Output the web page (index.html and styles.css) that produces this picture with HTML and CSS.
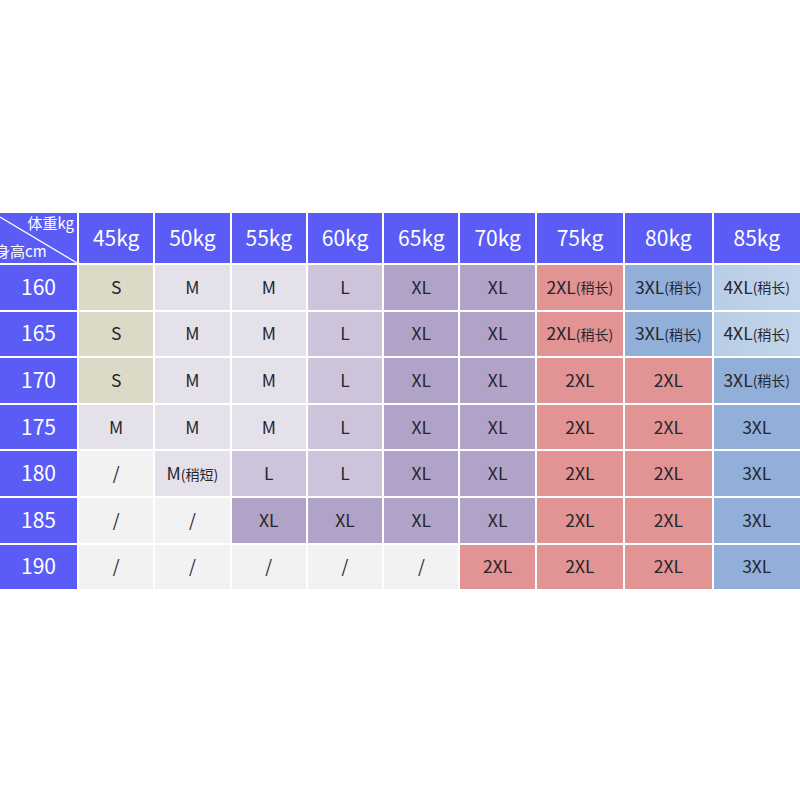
FILE: index.html
```html
<!DOCTYPE html>
<html lang="zh-CN">
<head>
<meta charset="utf-8">
<title>尺码表</title>
<link rel="stylesheet" href="styles.css">
</head>
<body>
<div class="page">
  <div class="chart">
    <div class="hd corner">
      <svg class="diag" viewBox="0 0 77 50" preserveAspectRatio="none"><line x1="0" y1="4" x2="77" y2="50" stroke="#fff" stroke-width="1.3"/></svg>
      <span class="c-top">体重kg</span>
      <span class="c-bot">身高cm</span>
    </div>
    <div class="hd">45kg</div><div class="hd">50kg</div><div class="hd">55kg</div><div class="hd">60kg</div><div class="hd">65kg</div><div class="hd">70kg</div><div class="hd">75kg</div><div class="hd">80kg</div><div class="hd">85kg</div>

    <div class="rl">160</div>
    <div class="c s">S</div><div class="c m">M</div><div class="c m">M</div><div class="c l">L</div><div class="c xl">XL</div><div class="c xl">XL</div><div class="c x2">2XL<small>(稍长)</small></div><div class="c x3">3XL<small>(稍长)</small></div><div class="c x4">4XL<small>(稍长)</small></div>

    <div class="rl">165</div>
    <div class="c s">S</div><div class="c m">M</div><div class="c m">M</div><div class="c l">L</div><div class="c xl">XL</div><div class="c xl">XL</div><div class="c x2">2XL<small>(稍长)</small></div><div class="c x3">3XL<small>(稍长)</small></div><div class="c x4">4XL<small>(稍长)</small></div>

    <div class="rl">170</div>
    <div class="c s">S</div><div class="c m">M</div><div class="c m">M</div><div class="c l">L</div><div class="c xl">XL</div><div class="c xl">XL</div><div class="c x2">2XL</div><div class="c x2">2XL</div><div class="c x3">3XL<small>(稍长)</small></div>

    <div class="rl">175</div>
    <div class="c m">M</div><div class="c m">M</div><div class="c m">M</div><div class="c l">L</div><div class="c xl">XL</div><div class="c xl">XL</div><div class="c x2">2XL</div><div class="c x2">2XL</div><div class="c x3">3XL</div>

    <div class="rl">180</div>
    <div class="c na">/</div><div class="c m">M<small>(稍短)</small></div><div class="c l">L</div><div class="c l">L</div><div class="c xl">XL</div><div class="c xl">XL</div><div class="c x2">2XL</div><div class="c x2">2XL</div><div class="c x3">3XL</div>

    <div class="rl">185</div>
    <div class="c na">/</div><div class="c na">/</div><div class="c xl">XL</div><div class="c xl">XL</div><div class="c xl">XL</div><div class="c xl">XL</div><div class="c x2">2XL</div><div class="c x2">2XL</div><div class="c x3">3XL</div>

    <div class="rl">190</div>
    <div class="c na">/</div><div class="c na">/</div><div class="c na">/</div><div class="c na">/</div><div class="c na">/</div><div class="c x2">2XL</div><div class="c x2">2XL</div><div class="c x2">2XL</div><div class="c x3">3XL</div>
  </div>
</div>
</body>
</html>
```

FILE: styles.css
```css
html, body {
  margin: 0;
  padding: 0;
  background: #ffffff;
}

.page {
  width: 800px;
  height: 800px;
  padding-top: 213px;
  box-sizing: border-box;
  font-family: "Noto Sans CJK SC", "Noto Sans", sans-serif;
}

.chart {
  display: grid;
  grid-template-columns: 77px repeat(6, 74.3px) repeat(3, 86.4px);
  grid-template-rows: 50px repeat(7, 44.6px);
  gap: 2px;
}

.hd {
  background: #5a5cf5;
  color: #ffffff;
  font-size: 21px;
  display: flex;
  align-items: center;
  justify-content: center;
  padding-bottom: 2px;
  box-sizing: border-box;
}

.corner {
  position: relative;
  overflow: hidden;
  font-size: 15px;
  padding: 0;
}

.diag {
  position: absolute;
  inset: 0;
  width: 100%;
  height: 100%;
}

.c-top {
  position: absolute;
  right: 3px;
  top: 0;
  line-height: 20px;
}

.c-bot {
  position: absolute;
  left: -5px;
  bottom: 2px;
  line-height: 20px;
}

.rl {
  background: #5a5cf5;
  color: #ffffff;
  font-size: 21px;
  display: flex;
  align-items: center;
  justify-content: center;
  padding-bottom: 3px;
  box-sizing: border-box;
}

.c {
  display: flex;
  align-items: center;
  justify-content: center;
  font-size: 17.5px;
  color: #26262e;
  white-space: nowrap;
  padding-bottom: 2px;
  box-sizing: border-box;
}

.c small {
  font-size: 14px;
  position: relative;
  top: 1px;
}

.s { background: #dcdac6; }
.m { background: #e4e1ea; }
.l { background: #cdc4dc; }
.xl { background: #b1a2c8; }
.x2 { background: #e29393; }
.x3 { background: #91afd8; }
.x4 { background: linear-gradient(90deg, #b8cde6, #c3d5ea); }
.na { background: #f2f2f2; }
```
